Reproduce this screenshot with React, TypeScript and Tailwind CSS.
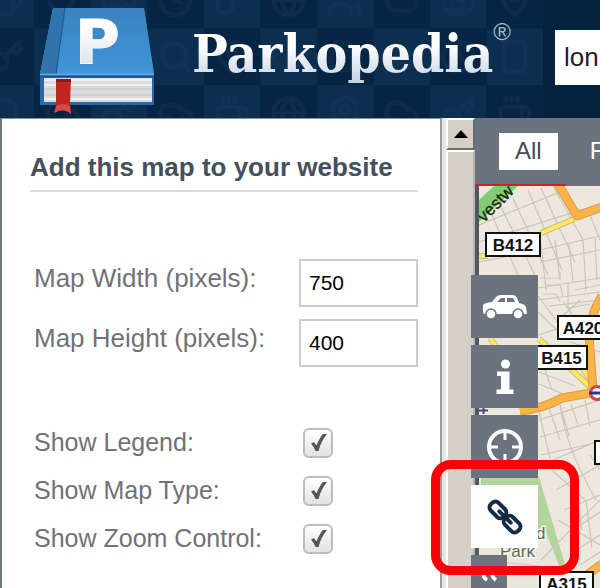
import { Cloud, Car, Search, Smartphone, Globe, MapPin, Clock, Key, Coffee, Users } from "lucide-react";

const TILE = 56.5;
const tileIcons = [
    [Coffee, Search, Car, Clock, Key, Globe, Users, Cloud, Globe, MapPin],
    [Key, Car, Globe, Search, MapPin, Cloud, Coffee, Car, Clock, Smartphone],
    [Search, Cloud, Key, Car, Coffee, Globe, MapPin, Cloud, Key, Coffee],
];

const HeaderPattern = () => {
    return (
        <svg className="absolute inset-y-0 left-0 h-full" width="544" height="118" aria-hidden="true">
            {tileIcons.map((row, r) =>
                row.map((Icon, c) => {
                    const x = c * TILE - 22;
                    const y = r * TILE - 28;
                    return (
                        <g key={`${r}-${c}`}>
                            <rect x={x} y={y} width={TILE} height={TILE} fill={(r + c) % 2 === 0 ? "#0c2e4f" : "#062544"} />
                            <Icon x={x + 10} y={y + 10} width={36} height={36} color="#1a3a5c" strokeWidth={3} opacity={0.35} />
                        </g>
                    );
                })
            )}
        </svg>
    );
};

const BookLogo = () => {
    return (
        <svg width="120" height="112" viewBox="38 4 120 112" role="img" aria-label="Parkopedia logo">
            <defs>
                <linearGradient id="cover" x1="0" y1="0" x2="0" y2="1">
                    <stop offset="0" stopColor="#3b82bf" />
                    <stop offset="1" stopColor="#3f96d8" />
                </linearGradient>
                <linearGradient id="letter" x1="0" y1="0" x2="0" y2="1">
                    <stop offset="0.3" stopColor="#ffffff" />
                    <stop offset="1" stopColor="#d5dae0" />
                </linearGradient>
            </defs>
            <path d="M53 8H144L154 75V105H40V75Z" fill="#2a67a6" />
            <path d="M53 8H144L154 74H40Z" fill="url(#cover)" />
            <path d="M53 8H65L56 74H40Z" fill="#2f74ad" />
            <path d="M65 8L56 74" stroke="#225a8d" strokeWidth="1.2" />
            <path d="M40 74.5H154" stroke="#61ace3" strokeWidth="1.4" />
            <path d="M40 76.5H154" stroke="#1f4f86" strokeWidth="1.5" />
            <rect x="44" y="78" width="108" height="24" fill="#dcdbdc" />
            <path d="M44 80H152M44 85H152M44 99H152" stroke="#f0eff0" strokeWidth="2" />
            <path d="M44 89H152M44 95H152" stroke="#c6c4c6" strokeWidth="1.2" />
            <path d="M56 79H71L70 104L71 114Q63 107 54 113Q57 108 56 102Z" fill="#bf2622" />
            <path d="M56 79H71V82H56Z" fill="#8c1715" />
            <path d="M56 106Q63 102 70 106L71 114Q63 107 54 113Z" fill="#d84a45" />
            <text x="75" y="63" fontSize="61" fontWeight="700" fill="url(#letter)" stroke="#f4f6f8" strokeWidth="1" className="font-['DejaVu_Sans',sans-serif]">P</text>
        </svg>
    );
};

const Header = () => {
    return (
        <header className="relative flex h-[118px] shrink-0 overflow-hidden bg-[#04233f]">
            <HeaderPattern />
            <div className="relative ml-[38px] mt-1 flex shrink-0 items-start">
                <BookLogo />
                <div className="relative ml-[34px] mt-3.5">
                    <h1 className="bg-linear-to-b from-white from-40% to-[#bccbe0] bg-clip-text font-['DejaVu_Serif_Condensed','DejaVu_Serif',serif] text-[53px] leading-[70px] font-bold text-transparent">Parkopedia</h1>
                    <span className="absolute left-full top-0 font-['Liberation_Sans',sans-serif] text-2xl leading-7 text-[#a9b8ca]">®</span>
                </div>
            </div>
            <input
                type="text"
                aria-label="Search location"
                defaultValue="lon"
                className="absolute left-[555px] top-[30px] h-[55px] w-60 bg-white px-[9px] font-['Liberation_Sans',sans-serif] text-[26px] text-[#222] outline-none"
            />
        </header>
    );
};

interface SizeFieldProps {
    id: string;
    label: string;
    value: number;
}

const SizeField = ({ id, label, value }: SizeFieldProps) => {
    return (
        <div className="flex items-start justify-between">
            <label htmlFor={id} className="pt-1 leading-[30px]">{label}</label>
            <input id={id} type="text" defaultValue={value} className="h-12 w-[119px] border-2 border-[#cdcdcd] bg-white px-2 text-[21px] text-black outline-none" />
        </div>
    );
};

interface ToggleFieldProps {
    id: string;
    label: string;
}

const ToggleField = ({ id, label }: ToggleFieldProps) => {
    return (
        <div className="flex h-12 items-center justify-between">
            <label htmlFor={id}>{label}</label>
            <span className="relative mr-[85px] size-[30px]">
                <input id={id} type="checkbox" defaultChecked className="peer block size-[30px] appearance-none rounded-md border-2 border-[#bcbcbc] bg-linear-to-b from-white to-[#e2e2e2]" />
                <svg viewBox="0 0 30 30" className="pointer-events-none absolute inset-0 hidden peer-checked:block" aria-hidden="true">
                    <path d="M8 15.500L11 14L13.500 17.500Q17 9 20 6H24Q18 13 15.500 23H12.500Q11 19 8 15.500Z" fill="#55555a" />
                </svg>
            </span>
        </div>
    );
};

const EmbedPanel = () => {
    return (
        <aside className="w-[440px] shrink-0 border-t border-l-2 border-t-[#8a929b] border-l-[#6b757c] bg-white pr-[22px] pl-7 pt-[33px] text-[26px] text-[#707276]">
            <h2 className="border-b-2 border-[#dadada] pb-2 text-[26px] leading-[30px] font-bold text-[#44505c]">Add this map to your website</h2>
            <form className="pl-1">
                <div className="mt-[67px] flex flex-col gap-3">
                    <SizeField id="map-width" label="Map Width (pixels):" value={750} />
                    <SizeField id="map-height" label="Map Height (pixels):" value={400} />
                </div>
                <div className="mt-[52px] text-[25px]">
                    <ToggleField id="show-legend" label="Show Legend:" />
                    <ToggleField id="show-map-type" label="Show Map Type:" />
                    <ToggleField id="show-zoom" label="Show Zoom Control:" />
                </div>
            </form>
        </aside>
    );
};

const ScrollBar = () => {
    return (
        <div className="flex w-[35px] shrink-0 flex-col border-l-2 border-[#9c9c9c] bg-[#e6e5e2] pl-1">
            <button type="button" aria-label="Scroll up" className="flex h-8 items-center justify-center border-2 border-t-white border-r-[#6b6b68] border-b-[#6b6b68] border-l-white bg-[#d4d0c8]">
                <svg width="14" height="8" viewBox="0 0 14 8" aria-hidden="true">
                    <path d="M7 0L14 8H0Z" fill="#000" />
                </svg>
            </button>
            <div className="flex-1 border-2 border-b-0 border-t-white border-r-[#b9b6af] border-l-white bg-[#d4d0c8]" />
        </div>
    );
};

interface RoadSignProps {
    x: number;
    y: number;
    w: number;
    text?: string;
}

const RoadSign = ({ x, y, w, text }: RoadSignProps) => {
    return (
        <g>
            <rect x={x + 1} y={y + 1} width={w - 2} height="23" fill="#fff" stroke="#111" strokeWidth="2" />
            {text && <text x={x + w / 2} y={y + 19} textAnchor="middle" fontSize="17" fontWeight="700" fill="#111">{text}</text>}
        </g>
    );
};

const StreetMap = () => {
    return (
        <svg className="absolute inset-0 h-full w-full" viewBox="479 186 121 402" preserveAspectRatio="xMinYMin slice" role="img" aria-label="Street map">
            <rect x="479" y="186" width="600" height="900" fill="#ece8de" />
            <path d="M481 477H539L572 588H564L540 530H481Z" fill="#b3d49b" />
            <path d="M481 530H545L568 588H481Z" fill="#e9e6dc" />
            {/* side streets */}
            <g fill="none" stroke="#cac5bb" strokeWidth="1.2">
                <path d="M479 225L560 192M479 242L600 204M500 205L535 275M513 198L548 275M528 190L562 270M541 188L575 262M492 215L520 280M553 186L583 240" />
                <path d="M479 262L540 250L600 236M540 262L600 250M538 288L600 278M538 300L600 292M541 244L546 290M555 240L560 280M569 244L573 282M583 240L586 290M595 238L597 280" />
                <path d="M590 215L600 240M540 278H560V272M545 285H560L563 296M543 294H556L560 302M568 284V308L590 304M575 290L600 285M538 296L556 320M538 312L562 335M549 306L600 300M556 322L580 300M538 335L560 328M563 302L575 318" />
                <path d="M540 346L556 360M570 342L600 352M539 372L575 386M539 384L568 396M545 370L552 390M577 360L590 372" />
                <path d="M539 420L600 400M540 437L600 420M541 455L600 442M539 412L550 458M549 408L560 440M560 405L569 436M571 404L578 425M585 400L590 426M560 405C566 440 574 460 596 500M548 462L600 440" />
                <path d="M552 470L585 500M556 490L600 465M564 510L600 495M558 520L600 545M570 532L600 512M576 550L600 535M580 565L600 552M590 455L600 470M574 480L582 530M586 500L592 548M541 560L600 500M481 560L540 566" />
            </g>
            {/* yellow roads */}
            <g fill="none">
                <path d="M541 233L574 219M479 256H488M539 339L590 387M490 338L496 346M577 360L592 382" stroke="#cdbd70" strokeWidth="6" />
                <path d="M541 233L574 219M479 256H488M539 339L590 387M490 338L496 346M577 360L592 382" stroke="#fbe96b" strokeWidth="4" />
            </g>
            {/* main roads */}
            <g fill="none" strokeLinejoin="round">
                <path d="M558 184L577 216L602 207M602 296Q590 315 589 335L593 390M520 411Q545 408 562 398L602 391M580 580L602 564" stroke="#dc9d45" strokeWidth="9" />
                <path d="M558 184L577 216L602 207M602 296Q590 315 589 335L593 390M520 411Q545 408 562 398L602 391M580 580L602 564" stroke="#fbb247" strokeWidth="7" />
            </g>
            <path d="M479 200L494 186H518L479 222Z" fill="#84cb76" />
            <text x="484" y="223" fontSize="17" fill="#14280f" stroke="#14280f" strokeWidth="0.3" transform="rotate(-45 484 223)">vestw</text>
            <circle cx="597" cy="393" r="6.500" fill="#fff" stroke="#d5434d" strokeWidth="3" />
            <path d="M589 393H605" stroke="#33368f" strokeWidth="3" />
            <path d="M479 410.500H488M483.500 407V414" stroke="#4b3f9b" strokeWidth="2" />
            <RoadSign x={485} y={232} w={56} text="B412" />
            <RoadSign x={557} y={315} w={52} text="A420" />
            <RoadSign x={535} y={345} w={53} text="B415" />
            <RoadSign x={539} y={571} w={55} text="A315" />
            <RoadSign x={594} y={440} w={55} />
            <g fontSize="17" fill="#5d6c57" stroke="#f4f5ec" strokeWidth="3" paintOrder="stroke">
                <text x="536" y="539">d</text>
                <text x="500" y="557">Park</text>
            </g>
        </svg>
    );
};

const CarIcon = () => {
    return (
        <svg width="44" height="26" viewBox="0 0 44 26" aria-hidden="true">
            <path d="M0 18V11Q1 9 9 8L13 3Q14.500 1 18 1H29Q33 1 34 4L36 9Q42 10 43 13L44 20H1Z" fill="#fff" />
            <path d="M14 8L18 4H22V8ZM24 4H30L32 8H24Z" fill="#6b747e" />
            <circle cx="8" cy="20" r="5" fill="#fff" stroke="#6b747e" strokeWidth="1.5" />
            <circle cx="35" cy="20" r="5" fill="#fff" stroke="#6b747e" strokeWidth="1.5" />
        </svg>
    );
};

const InfoIcon = () => {
    return (
        <svg width="20" height="36" viewBox="0 0 20 36" aria-hidden="true">
            <circle cx="10.500" cy="5" r="4.500" fill="#fff" />
            <path d="M2 12.500H14.500V30.500H18.500V35H1.500V30.500H6V17H2Z" fill="#fff" />
        </svg>
    );
};

const TargetIcon = () => {
    return (
        <svg width="38" height="38" viewBox="0 0 38 38" fill="none" stroke="#fff" aria-hidden="true">
            <circle cx="19" cy="19" r="16" strokeWidth="4" />
            <path d="M19 4V12M19 26V34M4 19H12M26 19H34" strokeWidth="3" />
        </svg>
    );
};

const LinkIcon = () => {
    return (
        <svg width="40" height="40" viewBox="0 0 40 40" fill="none" stroke="#142c45" strokeWidth="4" aria-hidden="true">
            <g transform="rotate(45 20 20)">
                <rect x="1" y="14.500" width="18" height="11" rx="4.500" />
                <rect x="21" y="14.500" width="18" height="11" rx="4.500" />
                <path d="M12 20H28" strokeWidth="4" strokeLinecap="round" />
            </g>
        </svg>
    );
};

const MapTools = () => {
    return (
        <div className="absolute -left-2 top-[89px] flex flex-col items-start gap-[7px]">
            <button type="button" aria-label="Parking" className="flex h-[63px] w-[67px] items-center justify-center bg-[#6b747e]">
                <CarIcon />
            </button>
            <button type="button" aria-label="Information" className="flex h-[63px] w-[67px] items-center justify-center bg-[#6b747e]">
                <InfoIcon />
            </button>
            <button type="button" aria-label="Locate me" className="flex h-[63px] w-[67px] items-center justify-center bg-[#6b747e]">
                <TargetIcon />
            </button>
            <button type="button" aria-label="Embed map" className="flex h-[63px] w-[67px] items-center justify-center bg-white">
                <LinkIcon />
            </button>
            <button type="button" aria-label="Collapse" className="flex h-[34px] w-9 items-start justify-center bg-[#6b747e] pt-4">
                <svg width="20" height="12" viewBox="0 0 20 12" fill="none" stroke="#fff" strokeWidth="3.5" aria-hidden="true">
                    <path d="M8 1Q1 4 8 9M17 1Q10 4 17 9" />
                </svg>
            </button>
        </div>
    );
};

const MapPanel = () => {
    return (
        <main className="flex min-w-0 flex-1 flex-col">
            <nav className="flex h-[66px] shrink-0 items-center overflow-hidden bg-[#6b747e] pl-6 text-2xl text-white">
                <button type="button" className="h-[37px] shrink-0 bg-white px-4 text-[#3f4a55]">All</button>
                <button type="button" className="h-[37px] shrink-0 px-8">F</button>
            </nav>
            <div className="h-[2px] w-[91px] shrink-0 bg-[#c0282d]" />
            <div className="relative flex-1 border-l-4 border-[#50575f]">
                <StreetMap />
                <MapTools />
            </div>
        </main>
    );
};

const App = () => {
    return (
        <div className="relative flex h-screen flex-col overflow-hidden bg-[#6b747e] font-['Liberation_Sans',Arial,sans-serif]">
            <Header />
            <div className="flex min-h-0 flex-1">
                <EmbedPanel />
                <ScrollBar />
                <MapPanel />
            </div>
            {/* highlight around the embed button */}
            <div className="pointer-events-none absolute left-[431px] top-[460px] h-[115px] w-[148px] rounded-[20px] border-[9px] border-[#fb0007]" />
        </div>
    );
};

export default App;
